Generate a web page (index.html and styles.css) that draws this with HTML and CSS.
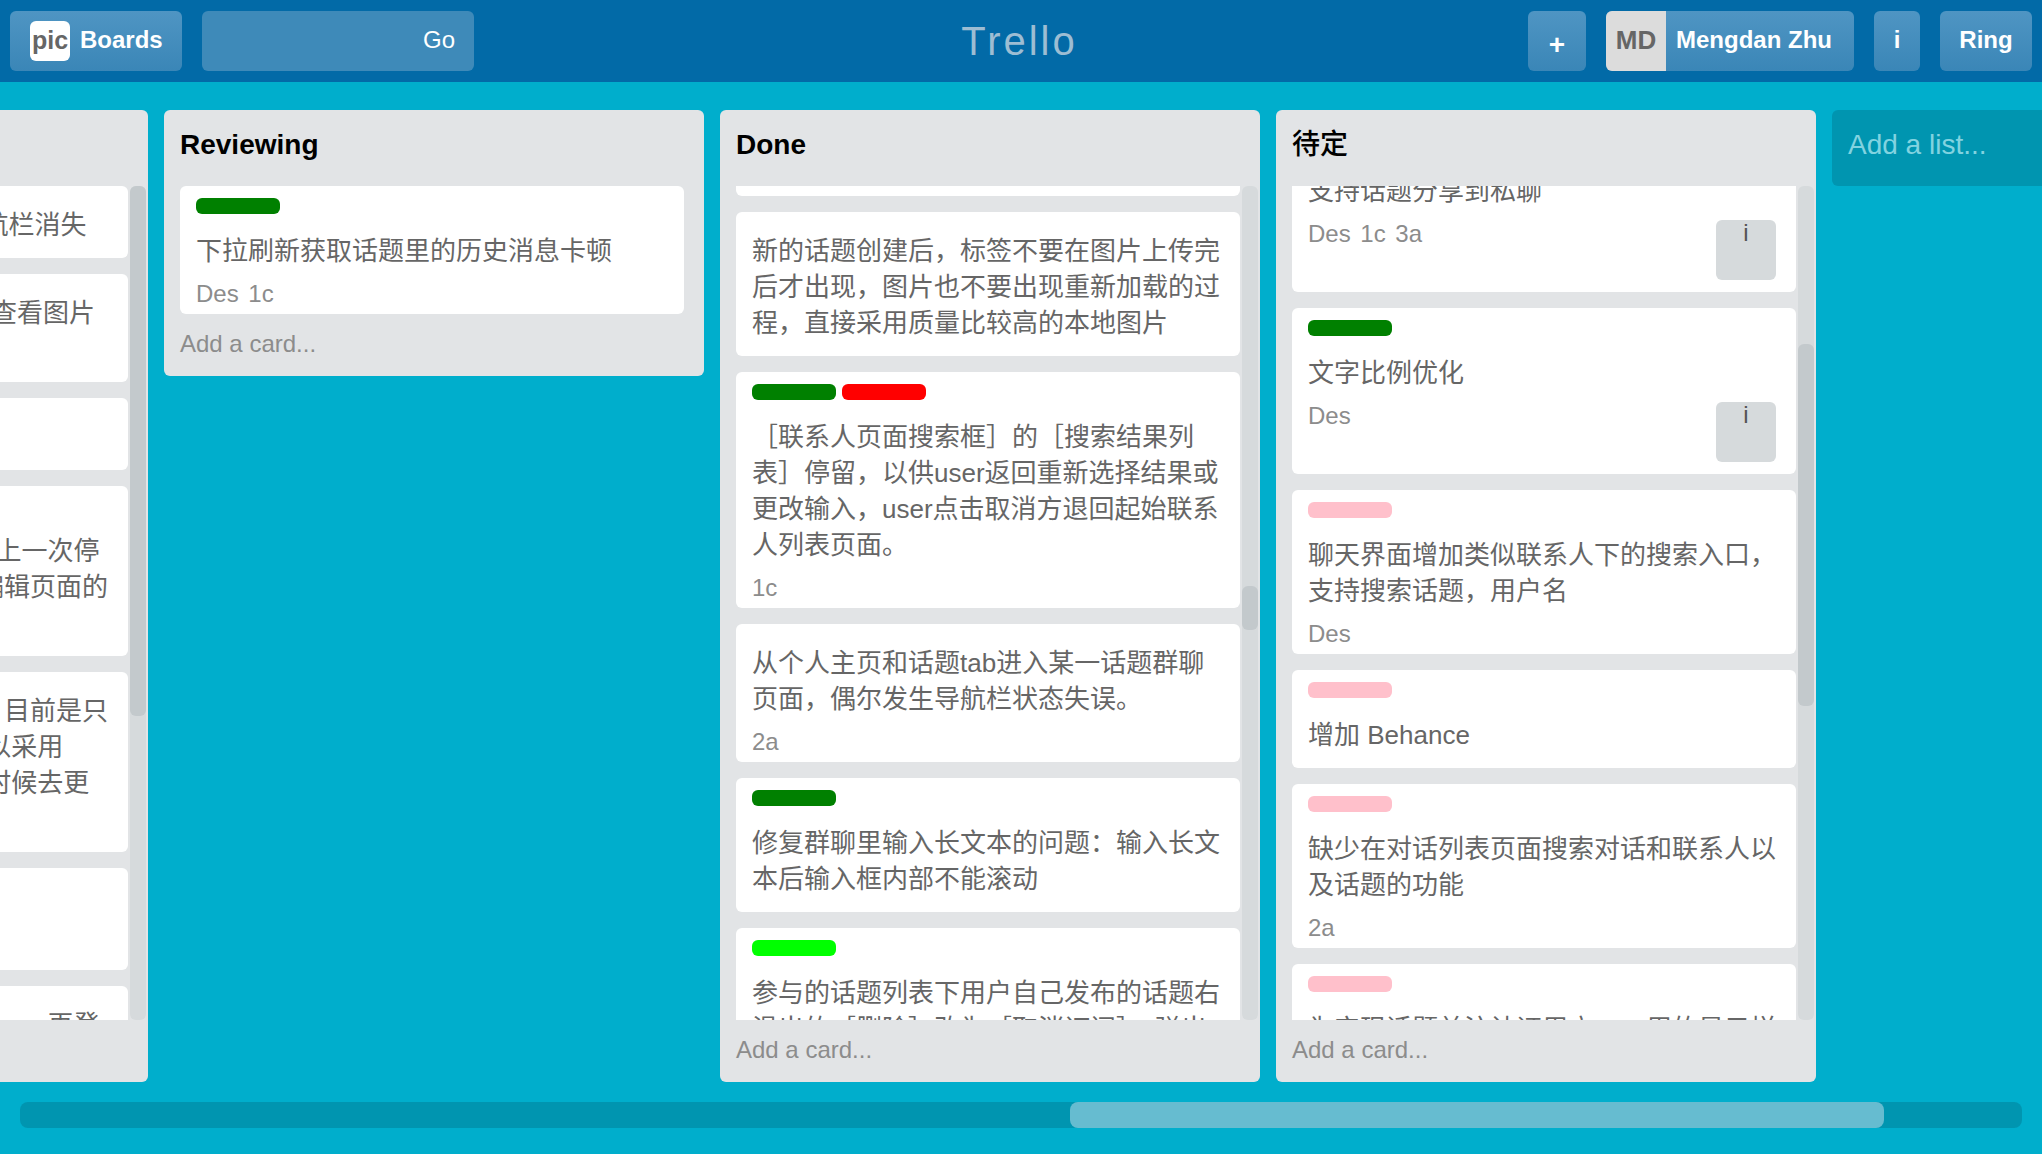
FILE: index.html
```html
<!DOCTYPE html>
<html lang="zh-CN">
<head>
    <meta charset="UTF-8">
    <title>Trello</title>
    <link rel="stylesheet" href="styles.css">
</head>
<body>
    <header class="topbar">
        <div class="topbar-left">
            <a class="btn btn-boards"><span class="logo">pic</span><span class="btn-label">Boards</span></a>
            <a class="btn btn-search"><span class="btn-label">Go</span></a>
        </div>
        <div class="brand">Trello</div>
        <div class="topbar-right">
            <a class="btn btn-plus">+</a>
            <a class="btn btn-user"><span class="avatar">MD</span><span class="btn-label user-name">Mengdan Zhu</span></a>
            <a class="btn btn-info"><span class="btn-label">i</span></a>
            <a class="btn btn-ring"><span class="btn-label">Ring</span></a>
        </div>
    </header>

    <main class="board">
        <section class="list list-tall">
            <div class="list-title"></div>
            <div class="list-body">
                <div class="cards">
                    <div class="stack">
                        <div class="card">
                            <p class="card-text no-label">从话题群聊页面push返回时导航栏消失</p>
                        </div>
                        <div class="card">
                            <p class="card-text no-label">在个人主页link中的话题进入后查看图片<br>大图</p>
                        </div>
                        <div class="card">
                            <p class="card-text no-label">优化消息列表</p>
                        </div>
                        <div class="card">
                            <div class="labels"><span class="label label-green"></span></div>
                            <p class="card-text">用户将app切到后台再回来回到上一次停<br>留的位置，并保留之前在话题编辑页面的<br>内容</p>
                        </div>
                        <div class="card">
                            <p class="card-text no-label">话题图片质量需要再优化一下，目前是只<br>用压缩后的小图，H5的大图可以采用<br>原图，用户点开H5页面查看的时候去更<br>新</p>
                        </div>
                        <div class="card">
                            <p class="card-text no-label">偶现闪退</p>
                            <div class="card-meta">1c</div>
                        </div>
                        <div class="card">
                            <p class="card-text no-label">切换账号后需要退出再重新输入app再登<br>录</p>
                        </div>
                    </div>
                </div>
                <div class="scrollbar"><div class="thumb thumb-first"></div></div>
            </div>
            <div class="add-card"></div>
        </section>

        <section class="list">
            <h2 class="list-title">Reviewing</h2>
            <div class="list-body">
                <div class="cards">
                    <div class="stack">
                        <div class="card">
                            <div class="labels"><span class="label label-green"></span></div>
                            <p class="card-text">下拉刷新获取话题里的历史消息卡顿</p>
                            <div class="card-meta"><span>Des 1c</span></div>
                        </div>
                    </div>
                </div>
            </div>
            <div class="add-card">Add a card...</div>
        </section>

        <section class="list list-tall">
            <h2 class="list-title">Done</h2>
            <div class="list-body">
                <div class="cards">
                    <div class="stack">
                        <div class="card card-stub"></div>
                        <div class="card">
                            <p class="card-text no-label">新的话题创建后，标签不要在图片上传完<br>后才出现，图片也不要出现重新加载的过<br>程，直接采用质量比较高的本地图片</p>
                        </div>
                        <div class="card">
                            <div class="labels"><span class="label label-green"></span><span class="label label-red"></span></div>
                            <p class="card-text">［联系人页面搜索框］的［搜索结果列<br>表］停留，以供user返回重新选择结果或<br>更改输入，user点击取消方退回起始联系<br>人列表页面。</p>
                            <div class="card-meta"><span>1c</span></div>
                        </div>
                        <div class="card">
                            <p class="card-text no-label">从个人主页和话题tab进入某一话题群聊<br>页面，偶尔发生导航栏状态失误。</p>
                            <div class="card-meta"><span>2a</span></div>
                        </div>
                        <div class="card">
                            <div class="labels"><span class="label label-green"></span></div>
                            <p class="card-text">修复群聊里输入长文本的问题：输入长文<br>本后输入框内部不能滚动</p>
                        </div>
                        <div class="card">
                            <div class="labels"><span class="label label-lime"></span></div>
                            <p class="card-text">参与的话题列表下用户自己发布的话题右<br>滑出的［删除］改为［取消订阅］，弹出</p>
                        </div>
                    </div>
                </div>
                <div class="scrollbar"><div class="thumb thumb-done"></div></div>
            </div>
            <div class="add-card">Add a card...</div>
        </section>

        <section class="list list-tall">
            <h2 class="list-title list-title-cjk">待定</h2>
            <div class="list-body">
                <div class="cards">
                    <div class="stack stack-scrolled">
                        <div class="card">
                            <p class="card-text no-label">支持话题分享到私聊</p>
                            <div class="card-meta card-meta-action"><span>Des 1c 3a</span><a class="card-btn">i</a></div>
                        </div>
                        <div class="card">
                            <div class="labels"><span class="label label-green"></span></div>
                            <p class="card-text">文字比例优化</p>
                            <div class="card-meta card-meta-action"><span>Des</span><a class="card-btn">i</a></div>
                        </div>
                        <div class="card">
                            <div class="labels"><span class="label label-pink"></span></div>
                            <p class="card-text">聊天界面增加类似联系人下的搜索入口，<br>支持搜索话题，用户名</p>
                            <div class="card-meta"><span>Des</span></div>
                        </div>
                        <div class="card">
                            <div class="labels"><span class="label label-pink"></span></div>
                            <p class="card-text">增加 Behance</p>
                        </div>
                        <div class="card">
                            <div class="labels"><span class="label label-pink"></span></div>
                            <p class="card-text">缺少在对话列表页面搜索对话和联系人以<br>及话题的功能</p>
                            <div class="card-meta"><span>2a</span></div>
                        </div>
                        <div class="card">
                            <div class="labels"><span class="label label-pink"></span></div>
                            <p class="card-text">为实现话题关注认证用户，一用的显示样</p>
                        </div>
                    </div>
                </div>
                <div class="scrollbar"><div class="thumb thumb-later"></div></div>
            </div>
            <div class="add-card">Add a card...</div>
        </section>

        <section class="add-list">Add a list...</section>
    </main>

    <div class="board-scroll"><div class="board-thumb"></div></div>
</body>
</html>
```
FILE: styles.css
```css
html, body {
    height: 100%;
}
body {
    margin: 0;
    overflow: hidden;
    background-color: #00aecc;
    font-family: "Liberation Sans", "Noto Sans CJK SC", sans-serif;
    color: #666;
}
.topbar {
    display: grid;
    grid-template-columns: 1fr auto 1fr;
    align-items: center;
    height: 82px;
    padding: 0 10px;
    box-sizing: border-box;
    background-color: #026aa7;
}
.topbar-left, .topbar-right {
    display: flex;
    gap: 20px;
}
.topbar-right {
    justify-content: flex-end;
}
.brand {
    margin-right: 3px;
    font-size: 40px;
    letter-spacing: 3px;
    color: #9dbdd3;
}
.btn {
    display: flex;
    align-items: center;
    height: 60px;
    box-sizing: border-box;
    border-radius: 6px;
    background: linear-gradient(#4f95c3, #3a86b7);
    color: #fff;
    font-size: 24px;
    font-weight: bold;
    overflow: hidden;
}
.btn-label {
    padding-bottom: 2px;
}
.btn-boards {
    width: 172px;
    padding-left: 20px;
    gap: 10px;
}
.logo {
    width: 40px;
    height: 40px;
    line-height: 38px;
    text-align: center;
    border-radius: 6px;
    background-color: #fff;
    color: #666;
    font-size: 25px;
}
.btn-search {
    width: 272px;
    padding-right: 19px;
    justify-content: flex-end;
    background: #3e8ab9;
    font-weight: normal;
}
.btn-plus {
    width: 58px;
    justify-content: center;
    padding-top: 8px;
    font-size: 28px;
}
.btn-user {
    width: 248px;
}
.avatar {
    width: 60px;
    height: 60px;
    line-height: 58px;
    text-align: center;
    background-color: #dcdcdc;
    color: #666;
    font-size: 26px;
}
.user-name {
    padding-left: 10px;
}
.btn-info {
    width: 46px;
    justify-content: center;
}
.btn-ring {
    width: 92px;
    justify-content: center;
}
.board {
    display: flex;
    align-items: flex-start;
    gap: 16px;
    margin-top: 28px;
    margin-left: -392px;
    width: 3000px;
}
.list {
    width: 540px;
    flex: none;
    display: flex;
    flex-direction: column;
    border-radius: 6px;
    background-color: #e2e4e6;
}
.list-tall {
    height: 972px;
}
.list-title {
    margin: 0;
    height: 76px;
    flex: none;
    padding-left: 16px;
    box-sizing: border-box;
    line-height: 70px;
    font-size: 28px;
    color: #000;
}
.list-title-cjk {
    font-weight: 500;
}
.list-body {
    flex: 1;
    min-height: 0;
    display: flex;
    gap: 2px;
    padding-left: 16px;
}
.cards {
    width: 504px;
    overflow: hidden;
}
.stack {
    display: flex;
    flex-direction: column;
    gap: 16px;
}
.stack-scrolled {
    margin-top: -34px;
}
.card {
    padding: 12px 16px 0;
    border-radius: 6px;
    background-color: #fff;
}
.card-stub {
    height: 10px;
    padding: 0;
    border-radius: 0 0 6px 6px;
}
.labels {
    display: flex;
    gap: 6px;
    height: 16px;
    margin-bottom: 18px;
}
.label {
    width: 84px;
    height: 16px;
    border-radius: 6px;
}
.label-green {
    background-color: #008000;
}
.label-red {
    background-color: #f00;
}
.label-lime {
    background-color: #0f0;
}
.label-pink {
    background-color: #ffc0cb;
}
.card-text {
    margin: 0 0 -1px;
    padding-top: 1px;
    font-size: 26px;
    line-height: 36px;
    white-space: nowrap;
}
.card-text.no-label {
    padding-top: 9px;
}
.card-text:last-child {
    margin-bottom: 15px;
}
.card-meta {
    padding: 8px 0 2px;
    font-size: 24px;
    line-height: 36px;
    word-spacing: 3px;
    color: #8c8c8c;
}
.card-meta-action {
    display: flex;
    justify-content: space-between;
    padding-bottom: 12px;
}
.card-btn {
    width: 60px;
    height: 60px;
    margin: 4px 4px 0 0;
    border-radius: 6px;
    background-color: #d6dadc;
    color: #555;
    text-align: center;
    line-height: 26px;
}
.scrollbar {
    width: 16px;
    flex: none;
    border-radius: 6px;
    background-color: #d6dadc;
}
.thumb {
    border-radius: 6px;
    background-color: #c3c9cc;
}
.thumb-first {
    height: 530px;
}
.thumb-done {
    height: 44px;
    margin-top: 400px;
}
.thumb-later {
    height: 362px;
    margin-top: 158px;
}
.add-card {
    height: 62px;
    flex: none;
    padding-left: 16px;
    line-height: 60px;
    font-size: 24px;
    color: #8c8c8c;
}
.add-list {
    width: 540px;
    height: 76px;
    flex: none;
    padding-left: 16px;
    box-sizing: border-box;
    line-height: 70px;
    border-radius: 6px;
    background-color: #0095b0;
    color: #82d3e0;
    font-size: 28px;
}
.board-scroll {
    margin: 20px 20px 0;
    height: 26px;
    border-radius: 8px;
    background-color: #0095b0;
}
.board-thumb {
    width: 814px;
    height: 26px;
    margin-left: 1050px;
    border-radius: 8px;
    background-color: #66bcd0;
}
```
